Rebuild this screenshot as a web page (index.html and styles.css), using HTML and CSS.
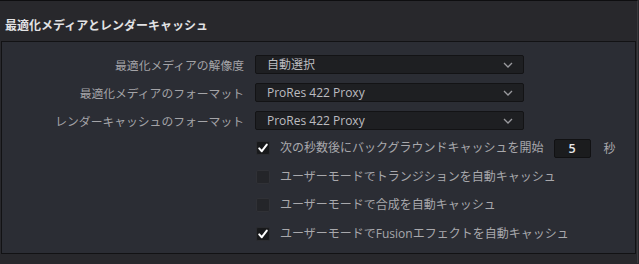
FILE: index.html
```html
<!DOCTYPE html>
<html lang="ja">
<head>
<meta charset="utf-8">
<title>最適化メディアとレンダーキャッシュ</title>
<link rel="stylesheet" href="styles.css">
</head>
<body>
<div class="window">
  <div class="header">最適化メディアとレンダーキャッシュ</div>
  <div class="panel">
    <div class="form">
      <div class="label">最適化メディアの解像度</div>
      <div class="select"><span>自動選択</span><svg class="chev" width="10" height="6" viewBox="0 0 10 6"><path d="M1 1 L5 5 L9 1" fill="none" stroke="#9a9a9e" stroke-width="1.3"/></svg></div>
      <div class="label">最適化メディアのフォーマット</div>
      <div class="select"><span>ProRes 422 Proxy</span><svg class="chev" width="10" height="6" viewBox="0 0 10 6"><path d="M1 1 L5 5 L9 1" fill="none" stroke="#9a9a9e" stroke-width="1.3"/></svg></div>
      <div class="label">レンダーキャッシュのフォーマット</div>
      <div class="select"><span>ProRes 422 Proxy</span><svg class="chev" width="10" height="6" viewBox="0 0 10 6"><path d="M1 1 L5 5 L9 1" fill="none" stroke="#9a9a9e" stroke-width="1.3"/></svg></div>
    </div>
    <div class="checks">
      <div class="check-row">
        <span class="box checked"><svg width="12" height="12" viewBox="0 0 12 12"><path d="M2.2 6.4 L4.8 9.2 L9.8 2.6" fill="none" stroke="#fff" stroke-width="2" stroke-linecap="round" stroke-linejoin="round"/></svg></span>
        <span class="ctext">次の秒数後にバックグラウンドキャッシュを開始</span>
        <span class="num">5</span>
        <span class="unit">秒</span>
      </div>
      <div class="check-row">
        <span class="box"></span>
        <span class="ctext">ユーザーモードでトランジションを自動キャッシュ</span>
      </div>
      <div class="check-row">
        <span class="box"></span>
        <span class="ctext">ユーザーモードで合成を自動キャッシュ</span>
      </div>
      <div class="check-row">
        <span class="box checked"><svg width="12" height="12" viewBox="0 0 12 12"><path d="M2.2 6.4 L4.8 9.2 L9.8 2.6" fill="none" stroke="#fff" stroke-width="2" stroke-linecap="round" stroke-linejoin="round"/></svg></span>
        <span class="ctext">ユーザーモードでFusionエフェクトを自動キャッシュ</span>
      </div>
    </div>
  </div>
</div>
</body>
</html>
```
FILE: styles.css
```css
html, body {
  margin: 0;
  padding: 0;
  background: #28282c;
  width: 639px;
  height: 264px;
  overflow: hidden;
  font-family: "Open Sans", "Noto Sans CJK JP", sans-serif;
}
.window {
  border-top: 1px solid #0e0e10;
  border-right: 1px solid #3a3a3e;
  height: 263px;
  box-sizing: border-box;
  width: 638px;
}
.header {
  height: 40px;
  box-sizing: border-box;
  padding: 0 0 0 5px;
  display: flex;
  align-items: center;
  padding-top: 7px;
  color: #e2e2e4;
  font-size: 12px;
  font-weight: bold;
  font-family: "Noto Sans CJK JP", sans-serif;
}
.panel {
  margin-left: 1px;
  margin-right: 1px;
  height: 213px;
  box-sizing: border-box;
  background: #2b2d34;
  border: 1px solid #121214;
  padding: 13px 0 0 0;
}
.form {
  display: grid;
  grid-template-columns: 242px 269px;
  column-gap: 11px;
  row-gap: 9px;
}
.label {
  text-align: right;
  font-size: 11.8px;
  color: #a4a4a8;
  height: 19px;
  line-height: 19px;
  font-family: "Noto Sans CJK JP", sans-serif;
}
.select {
  height: 19px;
  box-sizing: border-box;
  background: #1e1f22;
  border: 1px solid #131315;
  border-radius: 2px;
  display: flex;
  align-items: center;
  justify-content: space-between;
  padding: 0 10px 0 11px;
  color: #bcbcc0;
  font-size: 12px;
}
.select span { line-height: 17px; }
.chev { margin-top: 1px; }
.checks {
  display: flex;
  flex-direction: column;
  gap: 8.5px;
  margin-top: 8px;
  margin-left: 254px;
}
.check-row {
  height: 20px;
  display: flex;
  align-items: center;
}
.box {
  width: 14px;
  height: 14px;
  box-sizing: border-box;
  background: #242529;
  border: 1px solid #303136;
  border-radius: 2px;
  display: flex;
  align-items: center;
  justify-content: center;
  margin-right: 10px;
}
.box.checked { background: #18191b; border-color: #2a2b2f; }
.ctext {
  font-size: 12px;
  color: #a8a8ac;
  line-height: 20px;
}
.num {
  width: 37px;
  height: 19px;
  box-sizing: border-box;
  background: #1b1c1e;
  border: 1px solid #111113;
  border-radius: 2px;
  margin-left: 10px;
  color: #e8e8ea;
  font-size: 12.5px;
  font-weight: 600;
  display: flex;
  align-items: center;
  justify-content: center;
}
.unit {
  margin-left: 13px;
  font-size: 12px;
  color: #a8a8ac;
}
```
